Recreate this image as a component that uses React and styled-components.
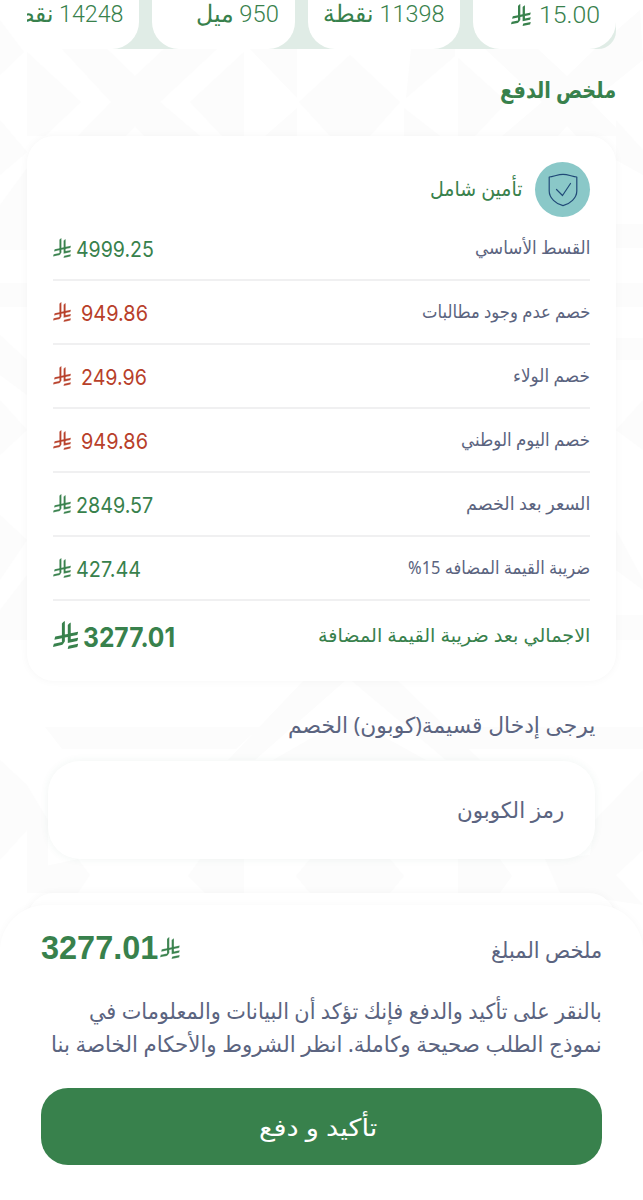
import { useLayoutEffect, useRef, useState } from 'react';
import styled, { createGlobalStyle } from 'styled-components';

const GREEN = '#38814c';
const RED = '#b8402a';
const SLATE = '#5b6480';

const rows = [
  { label: 'القسط الأساسي', labelWidth: 115, amount: '4999.25', width: 78 },
  { label: 'خصم عدم وجود مطالبات', labelWidth: 168, amount: '949.86', width: 67, discount: true },
  { label: 'خصم الولاء', labelWidth: 77, amount: '249.96', width: 66, discount: true },
  { label: 'خصم اليوم الوطني', labelWidth: 129, amount: '949.86', width: 67, discount: true },
  { label: 'السعر بعد الخصم', labelWidth: 124, amount: '2849.57', width: 77 },
  { label: 'ضريبة القيمة المضافه 15%', labelWidth: 182, amount: '427.44', width: 65 }
];

const shapes = [
  '0,20 24,52 0,75',
  '27,52 81,102 45,136 27,136',
  '62,49 107,49 135,76 164,49 217,49 160,102 200,136 144,136 135,126 126,136 78,136 111,102',
  '190,102 244,52 244,136 222,136',
  '250,49 297,49 297,98',
  '297,108 297,136 265,136',
  '299,102 350,55 400,102 370,136 330,136',
  '411,49 455,49 455,56 406,98',
  '404,108 440,136 404,136',
  '458,58 507,102 475,136 458,136',
  '485,49 538,49 567,76 595,49 640,10 643,60 591,102 624,136 576,136 567,126 558,136 502,136 542,102',
  '0,120 27,152 0,175',
  '27,168 27,250 0,250 0,205',
  '0,283 27,283 27,307 0,307',
  '0,335 27,360 27,395 0,375',
  '0,400 27,430 0,455',
  '0,515 27,540 0,580',
  '0,610 27,575 27,640 0,640',
  '616,120 643,150 643,175 616,160',
  '616,224 643,224 643,248 616,248',
  '616,283 643,283 643,307 616,307',
  '616,338 643,338 643,360 616,360',
  '616,430 643,400 643,450',
  '616,530 643,580 643,590 616,570',
  '616,615 643,615 643,640 616,640',
  '303,681 345,681 255,760 228,760',
  '352,681 398,681 480,760 446,760',
  '348,717 426,760 273,760',
  '45,727 260,727 236,749 62,749',
  '445,727 643,727 643,749 468,749',
  '0,760 27,785 48,820 48,870 27,893 27,830 0,860',
  '27,870 78,859 90,875 78,893 27,893',
  '200,859 244,859 244,893 205,893 188,876',
  '310,859 390,859 404,876 390,893 310,893 296,876',
  '458,859 500,859 512,876 500,893 458,893',
  '595,820 643,770 643,850 616,875 643,905 560,893 545,859 590,855'
];

// Squeezes or stretches a line so that it takes exactly `width` pixels.
const Fit = ({ width, children }) => {
  const ref = useRef(null);
  const [scale, setScale] = useState(1);

  useLayoutEffect(() => {
    setScale(width / ref.current.offsetWidth);
  }, [width, children]);

  return (
    <FitBox style={{ width }}>
      <FitText ref={ref} style={{ transform: `scaleX(${scale})` }}>
        {children}
      </FitText>
    </FitBox>
  );
};

const Riyal = ({ size = 20, thin = 14, lift = 1 }) => (
  <RiyalIcon viewBox='0 0 1125 1257' $size={size} $lift={lift}>
    <g stroke='#fff' strokeWidth={thin} fill='currentColor'>
      <path d='M699.62,1113.02c-20.06,44.48-33.32,92.75-38.4,143.37l424.51-90.24c20.06-44.47,33.31-92.75,38.4-143.37l-424.51,90.24Z' />
      <path d='M1085.73,895.8c20.06-44.47,33.32-92.75,38.4-143.37l-330.68,70.33v-135.2l292.27-62.11c20.06-44.47,33.32-92.75,38.4-143.37l-330.68,70.27V66.13c-50.67,28.45-95.67,66.32-132.25,110.99v403.35l-132.25,28.11V0c-50.67,28.44-95.67,66.32-132.25,110.99v525.69l-295.91,62.88c-20.06,44.47-33.33,92.75-38.42,143.37l334.33-71.05v170.26l-358.3,76.14c-20.06,44.47-33.32,92.75-38.4,143.37l375.04-79.7c30.53-6.35,56.77-24.4,73.83-49.24l68.78-101.97c7.14-10.55,11.3-23.27,11.3-36.97v-149.98l132.25-28.11v270.4l424.53-90.28Z' />
    </g>
  </RiyalIcon>
);

const Shield = () => (
  <svg width='30' height='34' viewBox='0 0 30 34' fill='none' stroke='#214a78' strokeWidth='1.2' strokeLinecap='round' strokeLinejoin='round'>
    <path d='M1.2 4C5.5 3.7 10 1.3 15 1.3S24.500 3.700 28.800 4V18C28.800 25 22 31 15 32.700C8 31 1.200 25 1.200 18Z' />
    <path d='M8.500 16.500L14.500 22.500L22.500 10.500' />
  </svg>
);

const App = () => (
  <>
    <GlobalStyle />
    <Page>
      <Pattern viewBox='0 0 643 920'>
        {shapes.map((points) => (
          <polygon key={points} points={points} />
        ))}
      </Pattern>
      <Chips>
        <Chip $width={143} $top={1}>
          <Fit width={61}>15.00</Fit>
          <Riyal size={22} thin={0} lift={0} />
        </Chip>
        <Chip $width={152}>
          <Fit width={121}>11398 نقطة</Fit>
        </Chip>
        <Chip $width={143}>
          <Fit width={83}>950 ميل</Fit>
        </Chip>
        <Chip $width={143}>
          <Fit width={120}>14248 نقطة</Fit>
        </Chip>
      </Chips>
      <Title>
        <Fit width={116}>ملخص الدفع</Fit>
      </Title>
      <Card>
        <CardHeader>
          <Badge>
            <Shield />
          </Badge>
          <Fit width={93}>تأمين شامل</Fit>
        </CardHeader>
        {rows.map(({ label, labelWidth, amount, width, discount }) => (
          <Row key={label}>
            <Label>
              <Fit width={labelWidth}>{label}</Fit>
            </Label>
            <Amount $discount={discount}>
              <Riyal />
              <Fit width={width}>{amount}</Fit>
            </Amount>
          </Row>
        ))}
        <TotalRow>
          <TotalLabel>
            <Fit width={272}>الاجمالي بعد ضريبة القيمة المضافة</Fit>
          </TotalLabel>
          <Total>
            <Riyal size={28} thin={0} lift={2} />
            <Fit width={92}>3277.01</Fit>
          </Total>
        </TotalRow>
      </Card>
      <CouponLabel>
        <Fit width={307}>يرجى إدخال قسيمة(كوبون) الخصم</Fit>
      </CouponLabel>
      <CouponField>
        <Fit width={107}>رمز الكوبون</Fit>
      </CouponField>
      <NextCard />
      <Footer>
        <Summary>
          <Fit width={111}>ملخص المبلغ</Fit>
          <SummaryAmount>
            <Fit width={117}>3277.01</Fit>
            <Riyal size={22} lift={0} />
          </SummaryAmount>
        </Summary>
        <Terms>
          <Fit width={513}>بالنقر على تأكيد والدفع فإنك تؤكد أن البيانات والمعلومات في</Fit>
          <Fit width={551}>نموذج الطلب صحيحة وكاملة. انظر الشروط والأحكام الخاصة بنا</Fit>
        </Terms>
        <Button type='button'>
          <Fit width={118}>تأكيد و دفع</Fit>
        </Button>
      </Footer>
    </Page>
  </>
);

const GlobalStyle = createGlobalStyle`
  * {
    box-sizing: border-box;
  }

  body {
    margin: 0;
    background: #fff;
    font-family: 'Noto Sans', 'DejaVu Sans', sans-serif;
  }
`;

const FitBox = styled.span`
  display: block;
  flex: none;
  text-align: start;
  white-space: nowrap;
`;

const FitText = styled.span`
  display: inline-block;
  transform-origin: right center;
`;

const RiyalIcon = styled.svg`
  flex: none;
  height: ${({ $size }) => $size}px;
  width: ${({ $size }) => $size * 0.9}px;
  margin-bottom: ${({ $lift }) => $lift * 2}px;
`;

const Page = styled.main`
  position: relative;
  display: flex;
  flex-direction: column;
  width: 643px;
  height: 1200px;
  overflow: hidden;
  direction: rtl;
  color: ${SLATE};
`;

const Pattern = styled.svg`
  position: absolute;
  inset: 0 0 auto 0;
  z-index: -1;
  width: 643px;
  height: 920px;
  fill: #fcfcfc;
`;

const Chips = styled.div`
  display: flex;
  gap: 13px;
  flex: none;
  width: 589px;
  height: 49px;
  margin: 0 27px;
  overflow: hidden;
  border-radius: 0 0 18px 0;
  background: #e0ece6;
`;

const Chip = styled.div`
  display: flex;
  flex: none;
  align-items: flex-start;
  gap: 8px;
  width: ${({ $width }) => $width}px;
  padding: ${({ $top = 0 }) => $top}px 16px 0 0;
  border-radius: 0 0 27px 27px;
  background: #fff;
  color: ${GREEN};
  font-family: Roboto, 'Noto Sans', 'DejaVu Sans', sans-serif;
  font-size: 24px;
  font-weight: 300;
  line-height: 28px;

  ${RiyalIcon} {
    margin-top: 3px;
  }
`;

const Title = styled.h1`
  margin: 19px 27px 0;
  height: 68px;
  color: ${GREEN};
  font-size: 23px;
  font-weight: 700;
  line-height: 42px;
`;

const Card = styled.section`
  flex: none;
  height: 545px;
  margin: 0 27px;
  padding: 26px 26px 0;
  border-radius: 27px;
  background: #fff;
  box-shadow: 0 0 8px rgba(0, 0, 0, 0.04);
`;

const CardHeader = styled.div`
  display: flex;
  align-items: center;
  gap: 12px;
  height: 55px;
  color: ${GREEN};
  font-size: 20px;

  ${FitBox} {
    padding-bottom: 2px;
  }
`;

const Badge = styled.span`
  display: grid;
  place-items: center;
  width: 55px;
  height: 55px;
  border-radius: 50%;
  background: #8ac8c8;
`;

const Row = styled.div`
  display: flex;
  align-items: center;
  justify-content: space-between;
  height: 64px;
  border-bottom: 2px solid #f0f0f1;
`;

const Label = styled.span`
  padding-bottom: 2px;
  font-size: 18px;
`;

const Amount = styled.span`
  display: flex;
  align-items: center;
  gap: ${({ $discount }) => ($discount ? 10 : 5)}px;
  padding-top: 2px;
  direction: ltr;
  color: ${({ $discount }) => ($discount ? RED : GREEN)};
  font-family: Inter, sans-serif;
  font-size: 22px;

  ${FitText} {
    transform-origin: left center;
  }
`;

const TotalRow = styled(Row)`
  height: 72px;
  border: 0;
`;

const TotalLabel = styled(Label)`
  padding-bottom: 4px;
  color: ${GREEN};
  font-size: 19px;
`;

const Total = styled(Amount)`
  padding-top: 0;
  font-size: 27px;
  font-weight: 700;
`;

const CouponLabel = styled.div`
  flex: none;
  height: 80px;
  padding: 25px 48px 0 0;
  font-size: 22px;
  line-height: 36px;
`;

const CouponField = styled.div`
  display: flex;
  align-items: center;
  flex: none;
  height: 98px;
  margin: 0 48px;
  padding: 0 31px 2px;
  border-radius: 32px;
  background: #fff;
  box-shadow: 0 0 8px rgba(40, 110, 80, 0.07);
  font-size: 22px;
`;

const NextCard = styled.div`
  flex: none;
  height: 40px;
  margin: 34px 27px 0;
  border-radius: 27px 27px 0 0;
  background: #fff;
  box-shadow: 0 0 8px rgba(0, 0, 0, 0.04);
`;

const Footer = styled.footer`
  flex: none;
  height: 295px;
  margin-top: -28px;
  padding: 22px 41px 0;
  border-radius: 46px 46px 0 0;
  background: #fff;
  box-shadow: 0 0 8px rgba(0, 0, 0, 0.03);
  font-size: 22px;
`;

const Summary = styled.div`
  display: flex;
  align-items: center;
  justify-content: space-between;
  height: 44px;
`;

const SummaryAmount = styled(Amount)`
  gap: 2px;
  padding: 0 0 2px;
  font-family: 'Liberation Sans', sans-serif;
  font-size: 33px;
  font-weight: 700;
`;

const Terms = styled.div`
  height: 66px;
  margin-top: 23px;
  line-height: 33px;
`;

const Button = styled.button`
  display: flex;
  align-items: center;
  justify-content: center;
  width: 561px;
  height: 77px;
  margin-top: 28px;
  padding: 0 6px 0 0;
  border: 0;
  border-radius: 27px;
  background: ${GREEN};
  color: #fff;
  font-family: inherit;
  font-size: 24px;
`;

export default App;
